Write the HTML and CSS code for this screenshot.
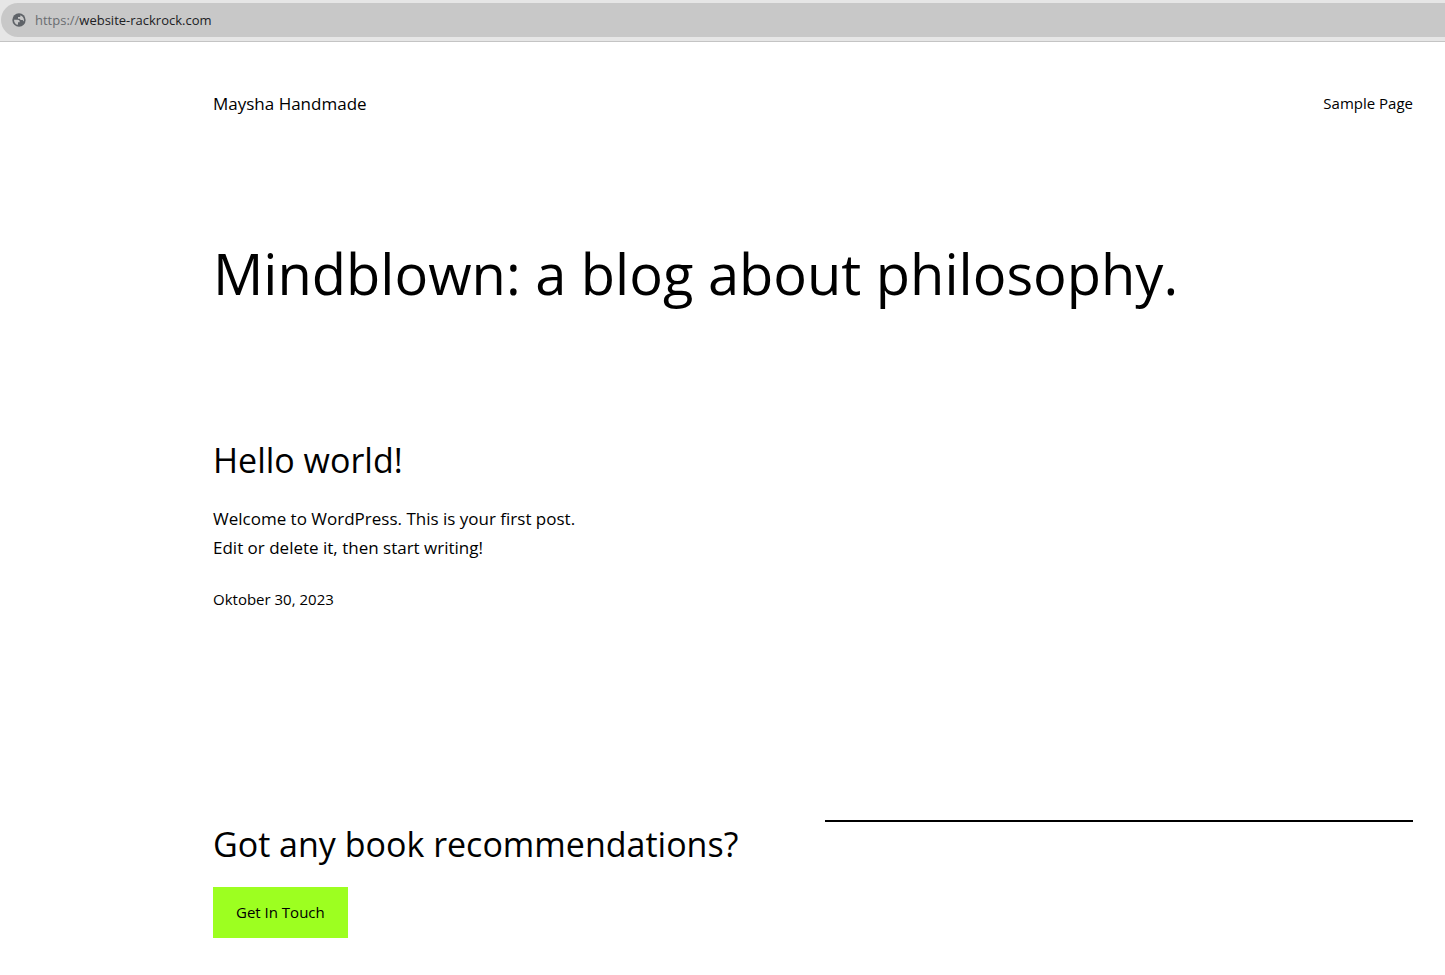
FILE: index.html
```html
<!DOCTYPE html>
<html lang="en">
<head>
    <meta charset="UTF-8">
    <meta name="viewport" content="width=device-width, initial-scale=1.0">
    <title>Maysha Handmade</title>
    <link rel="stylesheet" href="styles.css">
</head>
<body>
    <div class="browser-bar">
        <div class="address-bar">
            <svg class="globe-icon" viewBox="0 0 24 24" aria-hidden="true">
                <circle cx="12" cy="12" r="10"/>
                <path class="globe-land" d="M4.500 11.500h6c1.300 0 2.500 1.200 2.500 2.500v1.500h-2.500v3.800C7 18.800 4.500 15.600 4.500 11.500zM14 4.700c3.100.9 5.500 3.700 5.500 7.300 0 .8-.1 1.500-.3 2.200l-1.700-2.200h-3l-1.500-2h-2.500V7.500h2.500c.8 0 1-.6 1-1.300z"/>
            </svg>
            <span class="url"><span class="url-scheme">https://</span>website-rackrock.com</span>
        </div>
    </div>

    <div class="site">
        <header class="site-header">
            <a class="site-title" href="#">Maysha Handmade</a>
            <nav>
                <a class="nav-link" href="#">Sample Page</a>
            </nav>
        </header>

        <main>
            <h1 class="page-title">Mindblown: a blog about philosophy.</h1>

            <article class="post">
                <h2 class="heading"><a href="#">Hello world!</a></h2>
                <p class="post-excerpt">Welcome to WordPress. This is your first post. Edit or delete it, then start writing!</p>
                <a class="post-date" href="#">Oktober 30, 2023</a>
            </article>

            <section class="contact">
                <div>
                    <h2 class="heading">Got any book recommendations?</h2>
                    <button class="contact-button" type="button">Get In Touch</button>
                </div>
                <hr class="separator">
            </section>
        </main>
    </div>
</body>
</html>
```

FILE: styles.css
```css
* {
    margin: 0;
    padding: 0;
    box-sizing: border-box;
}

body {
    background-color: #ffffff;
    color: #000000;
    font-family: "Segoe UI", "Open Sans", "Noto Sans", sans-serif;
    font-size: 17px;
    font-weight: 400;
    line-height: 29px;
}

a {
    color: inherit;
    text-decoration: none;
}

.browser-bar {
    background-color: #e6e6e6;
    border-bottom: 1px solid #c4c4c4;
    padding: 3px 0 4px 1px;
}

.address-bar {
    display: flex;
    align-items: center;
    gap: 8px;
    height: 34px;
    padding-left: 10px;
    background-color: #c8c8c8;
    border-radius: 17px 0 0 17px;
}

.globe-icon {
    width: 16px;
    height: 16px;
    fill: #5f6368;
}

.globe-land {
    fill: #c8c8c8;
}

.url {
    color: #202124;
    font-size: 13px;
}

.url-scheme {
    color: #6a6d71;
}

.site {
    max-width: 1445px;
    padding: 46px 32px 37px 213px;
}

.site-header {
    display: flex;
    justify-content: space-between;
    align-items: center;
    margin-bottom: 120px;
}

.nav-link,
.post-date {
    font-size: 15px;
}

.page-title {
    font-size: 56px;
    font-weight: 400;
    line-height: 70px;
    margin-bottom: 128px;
}

.heading {
    font-size: 34px;
    font-weight: 400;
    line-height: 48px;
}

.post {
    max-width: 379px;
    margin-bottom: 206px;
}

.post-excerpt {
    margin: 20px 0 22px;
}

.contact {
    display: grid;
    grid-template-columns: 1fr 1fr;
    gap: 24px;
}

.contact-button {
    margin-top: 19px;
    padding: 11px 23px;
    border: none;
    background-color: #9dff20;
    color: #000000;
    font: inherit;
    font-size: 15px;
    cursor: pointer;
}

.separator {
    border: none;
    border-top: 2px solid #000000;
}
```
